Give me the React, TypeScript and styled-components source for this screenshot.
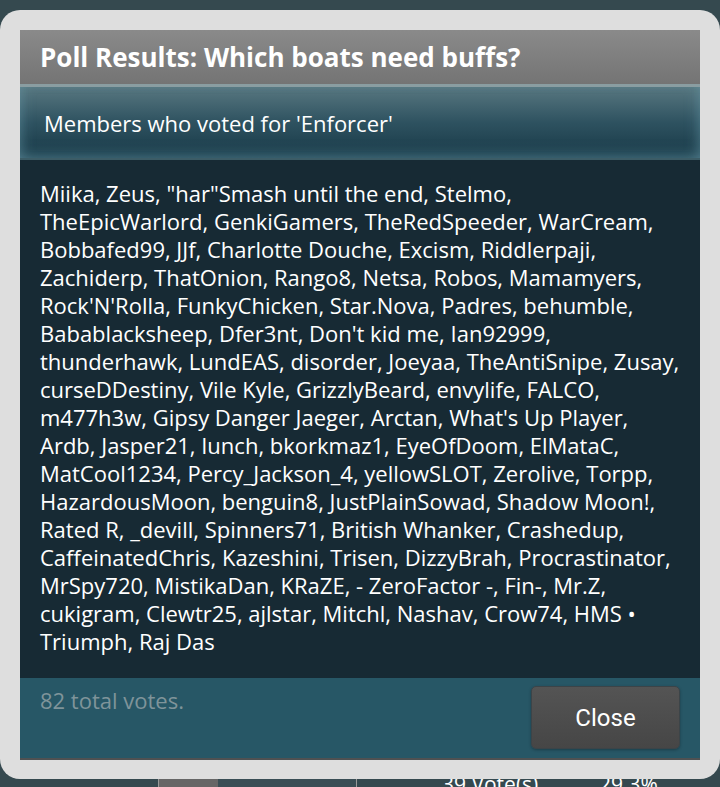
import React from "react";
import styled, { createGlobalStyle } from "styled-components";

const Global = createGlobalStyle`
  html, body { margin: 0; padding: 0; }
  body {
    background: #35494f;
    font-family: "Open Sans", "DejaVu Sans", sans-serif;
    width: 720px;
    height: 787px;
    overflow: hidden;
  }
`;

const Page = styled.div`
  height: 787px;
  display: flex;
  flex-direction: column;
  justify-content: flex-end;
`;

const ResultRow = styled.div`
  display: flex;
  align-items: center;
  padding-left: 158px;
  height: 26px;
  margin-bottom: -10px;
`;

const Bar = styled.div`
  width: 197px;
  height: 22px;
  border: 1px solid #9a9a9a;
  background: #3a4e55;
  display: flex;
`;

const BarFill = styled.div`
  background: #666666;
  height: 100%;
`;

const RowText = styled.span<{ $w: number }>`
  color: #ffffff;
  font-size: 21px;
  width: ${(p) => p.$w}px;
  white-space: nowrap;
`;

const Overlay = styled.div`
  position: fixed;
  top: 10px;
  left: 0;
  width: 720px;
  height: 769px;
`;

const Dialog = styled.div`
  box-sizing: border-box;
  height: 100%;
  background: #dedede;
  border-radius: 20px;
  padding: 20px 20px 19px 20px;
  display: flex;
  flex-direction: column;
`;

const Header = styled.div`
  height: 54px;
  flex-shrink: 0;
  background: linear-gradient(#8a8a8a, #747474);
  display: flex;
  align-items: center;
  padding-left: 20px;
  color: #ffffff;
  font-family: "Open Sans", sans-serif;
  font-weight: 700;
  font-size: 26px;
`;

const SubHeader = styled.div`
  height: 76px;
  flex-shrink: 0;
  box-sizing: border-box;
  border-top: 3px solid #8a9da1;
  border-bottom: 2px solid #3c5c66;
  background: linear-gradient(#587780 0%, #2e5260 50%, #173846 100%);
  box-shadow: inset 0 -10px 14px -6px rgba(110, 160, 175, 0.45),
    inset 10px 0 14px -8px rgba(110, 160, 175, 0.4),
    inset -10px 0 14px -8px rgba(110, 160, 175, 0.4);
  display: flex;
  align-items: center;
  padding-left: 24px;
  color: #ffffff;
  font-size: 22px;
`;

const Body = styled.div`
  flex: 1;
  background: #172a34;
  padding: 19px 20px 0 20px;
  color: #ffffff;
  font-size: 22px;
  line-height: 28px;
`;

const Line = styled.div`
  white-space: nowrap;
`;

const Footer = styled.div`
  height: 82px;
  flex-shrink: 0;
  box-sizing: border-box;
  background: #275766;
  border-bottom: 2px solid #4f5152;
  display: flex;
  justify-content: space-between;
  align-items: flex-start;
  padding: 8px 20px 0 20px;
`;

const Total = styled.span`
  color: #7f949a;
  font-size: 22px;
  line-height: 28px;
`;

const CloseButton = styled.button`
  width: 149px;
  height: 63px;
  background: linear-gradient(#545454, #464646);
  border: 1px solid #3c4448;
  border-radius: 5px;
  box-shadow: 0 1px 3px rgba(0, 0, 0, 0.3);
  color: #ffffff;
  font-family: Roboto, "Open Sans", sans-serif;
  font-size: 24px;
  cursor: pointer;
`;

const lines = [
  `Miika, Zeus, "har"Smash until the end, Stelmo,`,
  `TheEpicWarlord, GenkiGamers, TheRedSpeeder, WarCream,`,
  `Bobbafed99, JJf, Charlotte Douche, Excism, Riddlerpaji,`,
  `Zachiderp, ThatOnion, Rango8, Netsa, Robos, Mamamyers,`,
  `Rock'N'Rolla, FunkyChicken, Star.Nova, Padres, behumble,`,
  `Babablacksheep, Dfer3nt, Don't kid me, Ian92999,`,
  `thunderhawk, LundEAS, disorder, Joeyaa, TheAntiSnipe, Zusay,`,
  `curseDDestiny, Vile Kyle, GrizzlyBeard, envylife, FALCO,`,
  `m477h3w, Gipsy Danger Jaeger, Arctan, What's Up Player,`,
  `Ardb, Jasper21, Iunch, bkorkmaz1, EyeOfDoom, ElMataC,`,
  `MatCool1234, Percy_Jackson_4, yellowSLOT, Zerolive, Torpp,`,
  `HazardousMoon, benguin8, JustPlainSowad, Shadow Moon!,`,
  `Rated R, _devill, Spinners71, British Whanker, Crashedup,`,
  `CaffeinatedChris, Kazeshini, Trisen, DizzyBrah, Procrastinator,`,
  `MrSpy720, MistikaDan, KRaZE, - ZeroFactor -, Fin-, Mr.Z,`,
  `cukigram, Clewtr25, ajlstar, Mitchl, Nashav, Crow74, HMS •`,
  `Triumph, Raj Das`,
];

export default function App() {
  return (
    <>
      <Global />
      <Page>
        <ResultRow>
          <Bar>
            <BarFill style={{ width: "30%" }} />
          </Bar>
          <RowText $w={85} />
          <RowText $w={157}>39 Vote(s)</RowText>
          <RowText $w={80}>29.3%</RowText>
        </ResultRow>
      </Page>
      <Overlay>
        <Dialog>
          <Header>Poll Results: Which boats need buffs?</Header>
          <SubHeader>Members who voted for 'Enforcer'</SubHeader>
          <Body>
            {lines.map((l, i) => (
              <Line key={i}>{l}</Line>
            ))}
          </Body>
          <Footer>
            <Total>82 total votes.</Total>
            <CloseButton>Close</CloseButton>
          </Footer>
        </Dialog>
      </Overlay>
    </>
  );
}
